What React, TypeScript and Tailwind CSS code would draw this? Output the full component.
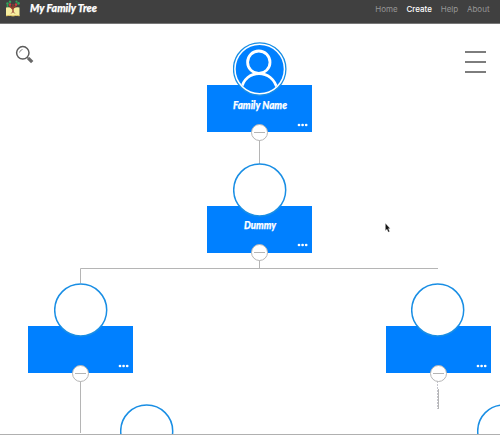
type PersonProps = { x: number; y: number; name?: string; nameWidth?: number; avatar?: boolean };

function Ring() {
  return (
    <svg width="54" height="54" viewBox="0 0 54 54" className="block">
      <circle cx="26.7" cy="27" r="26" fill="#fff" stroke="#198ee4" strokeWidth="1.5" />
    </svg>
  );
}

function Avatar() {
  return (
    <svg width="54" height="54" viewBox="0 0 54 54" className="block">
      <defs>
        <clipPath id="face"><circle cx="26.7" cy="27" r="24" /></clipPath>
      </defs>
      <circle cx="26.7" cy="27" r="26.2" fill="#fff" stroke="#198ee4" strokeWidth="1.3" />
      <circle cx="26.7" cy="27" r="24" fill="#0080ff" />
      <g clipPath="url(#face)" fill="none" stroke="#fff" strokeWidth="2.8">
        <circle cx="25.8" cy="20.2" r="11.2" />
        <path d="M8 48C10 36.5 18 31.6 26 31.6S42 36.5 44.5 48" />
      </g>
    </svg>
  );
}

function Person({ x, y, name, nameWidth, avatar }: PersonProps) {
  return (
    <div className="absolute h-[98px] w-[105px]" style={{ left: x, top: y }}>
      <div className="mt-[42.5px] h-[47px] w-[105px] bg-[#0080ff]" />
      <div className="absolute left-[25.5px] top-[-0.5px]">{avatar ? <Avatar /> : <Ring />}</div>
      {name && (
        <svg className="absolute left-0 top-[52px]" width="105" height="20">
          <text x="53" y="14" textAnchor="middle" textLength={nameWidth} lengthAdjust="spacingAndGlyphs" fill="#fff" stroke="#fff" strokeWidth=".25" className="font-['Lato',cursive] text-[11px] font-black italic">{name}</text>
        </svg>
      )}
      <svg className="absolute left-[90px] top-[80px]" width="12" height="5" fill="#fff">
        <circle cx="2" cy="2" r="1.35" /><circle cx="5.6" cy="2" r="1.35" /><circle cx="9.2" cy="2" r="1.35" />
      </svg>
      <svg className="absolute left-[44px] top-[81px]" width="17" height="17">
        <circle cx="8.5" cy="8.5" r="8" fill="#fff" stroke="#b5b5b5" />
        <path d="M3 8.5h11" stroke="#b5b5b5" />
      </svg>
    </div>
  );
}

function TreeLogo() {
  return (
    <svg width="16" height="17" viewBox="0 0 16 17">
      <path d="M1 7.5q4-.7 7 1.3 3-2 6.5-1.3v8.5H1z" fill="#f7efa0" />
      <path d="M1 15.8q4-1 7 .2 3-1.2 6.5-.2" fill="none" stroke="#d8bd62" />
      <path d="M8 12.5V7M8 9.5L4 5M8 8.5l4-4M8 9V4" fill="none" stroke="#963f2d" strokeWidth="1.3" />
      <path d="M6.2 13.5l1.8-2 1.8 2" fill="none" stroke="#ad684c" />
      <g fill="#2fa45c"><circle cx="2.5" cy="3.6" r="1.3" /><circle cx="5" cy="1.8" r="1.2" /><circle cx="13.5" cy="3.4" r="1.3" /><circle cx="2.5" cy="6" r="1" /><circle cx="11.5" cy="1.7" r="1.1" /></g>
      <g fill="#cf3b45"><circle cx="5" cy="4.5" r="1.2" /><circle cx="11" cy="4.5" r="1.2" /></g>
    </svg>
  );
}

export default function App() {
  return (
    <div className="relative h-[435px] w-[500px] overflow-hidden bg-white font-['Inter','Liberation_Sans',sans-serif]">
      <header className="flex h-6 items-start border-b border-[#777] bg-[#404040] pl-[5px] pr-[10.5px]">
        <TreeLogo />
        <svg width="85" height="20" className="ml-[8px]">
          <text x="1" y="12" textLength="67" lengthAdjust="spacingAndGlyphs" fill="#fff" stroke="#fff" strokeWidth=".25" className="font-['Lato',cursive] text-[11.5px] font-black italic">My Family Tree</text>
        </svg>
        <nav className="ml-auto flex gap-[8.8px] pt-[3px] text-[8px] leading-3 text-[#969696]">
          <a>Home</a><a className="font-medium text-white">Create</a><a>Help</a><a>About</a>
        </nav>
      </header>

      <div className="flex items-start justify-between pl-[15px] pr-[14px] pt-[21px]">
        <svg width="20" height="20" viewBox="0 0 20 20" fill="none">
          <circle cx="7.8" cy="7.8" r="6.2" stroke="#5c5c5c" strokeWidth="1.5" />
          <path d="M4.5 7.5Q5 5 7.5 4.5" stroke="#888" />
          <path d="M12 12l1.5 1.5" stroke="#666" strokeWidth="1.5" />
          <path d="M13.2 13.2l4 4" stroke="#686868" strokeWidth="3.3" />
        </svg>
        <div className="flex w-[21px] flex-col gap-2 pt-[6px]">
          <i className="h-[2px] bg-[#7d7d7d]" /><i className="h-[2px] bg-[#7d7d7d]" /><i className="h-[2px] bg-[#7d7d7d]" />
        </div>
      </div>

      <svg className="absolute left-0 top-0" width="500" height="435" fill="none" stroke="#b5b5b5">
        <path d="M259.5 132V164M259.5 253V268.5M80.5 283V268.5H438M80.5 373V433M438.5 389V409" />
        <path d="M437.5 381v28" strokeDasharray="2 1" stroke="#c4c4cc" />
      </svg>
      <Person x={207} y={42.5} name="Family Name" nameWidth={54} avatar />
      <Person x={207} y={163} name="Dummy" nameWidth={32} />
      <Person x={28.3} y={283.5} />
      <Person x={385.5} y={283.5} />
      <div className="absolute left-[120px] top-[404px]"><Ring /></div>
      <div className="absolute left-[477px] top-[404px]"><Ring /></div>
      <div className="absolute inset-x-0 bottom-0 h-px bg-[#b0b0b0]" />
      <svg className="absolute left-[385px] top-[223px]" width="6" height="10" viewBox="0 0 6 10">
        <path d="M.5.5v7L2 6l1.3 3 1.2-.6L3.3 5.6H5z" fill="#111" stroke="#aaa" strokeWidth=".3" />
      </svg>
    </div>
  );
}
